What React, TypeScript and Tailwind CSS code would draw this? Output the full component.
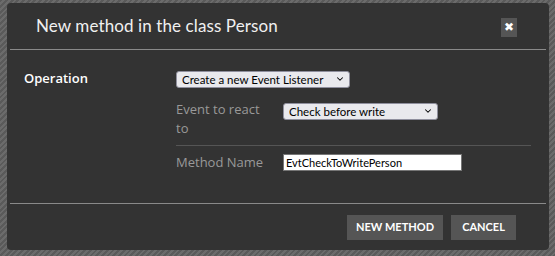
import { ChevronDown } from 'lucide-react'

const OPERATIONS = ['Create a new Event Listener', 'Create a new Method']
const EVENTS = ['Check before write', 'After write', 'Before delete']

function Select({ options, width }: { options: string[]; width: string }) {
  return (
    <div className={`relative ${width}`}>
      <select
        defaultValue={options[0]}
        className="w-full h-[17px] appearance-none rounded-[3px] border border-[#8f8f9d] bg-[#e9e9ed] pl-[5px] pr-[16px] text-[11.5px] leading-[15px] text-black font-['Lato',sans-serif] outline-none"
      >
        {options.map((o) => (
          <option key={o}>{o}</option>
        ))}
      </select>
      <ChevronDown
        className="pointer-events-none absolute right-[5px] top-[4px] w-[10px] h-[10px] text-black"
        strokeWidth={2.5}
      />
    </div>
  )
}

export default function App() {
  return (
    <div className="w-[555px] h-[256px] pt-[3px] pl-[7px] bg-[repeating-linear-gradient(135deg,#5a5a5a_0px,#5a5a5a_2px,#6b6b6b_2px,#6b6b6b_4px)]">
      <div className="w-[542px] h-[247px] rounded-[4px] bg-[#333333] px-[3px] flex flex-col">

        {/* Header */}
        <div className="h-[47px] shrink-0 flex items-center justify-between pl-[26px] pr-[29px] border-b border-[#8a8a8a]">
          <h1 className="text-[17px] text-[#f0f0f0] font-['Lato',sans-serif] tracking-[0.1px]">
            New method in the class Person
          </h1>
          <button className="w-[16px] h-[19px] mt-[2px] bg-[#555555] flex items-center justify-center text-white text-[12px] font-bold leading-none font-['DejaVu_Sans',sans-serif]">
            ✖
          </button>
        </div>

        {/* Body */}
        <div className="h-[153px] shrink-0 pt-[20px] pl-[14px] pr-[15px] font-['Open_Sans',sans-serif] text-[13px]">
          <div className="flex">
            <div className="w-[152px] shrink-0 font-semibold text-white leading-[17px]">Operation</div>
            <div className="flex-1 flex flex-col">
              <Select options={OPERATIONS} width="w-[174px]" />

              <div className="flex mt-[12px] pb-[7px] border-b border-[#555555]">
                <div className="w-[107px] shrink-0 text-[#999999] leading-[19px] pr-[10px] -mt-[2px]">Event to react to</div>
                <Select options={EVENTS} width="w-[155px]" />
              </div>

              <div className="flex items-center mt-[7px]">
                <div className="w-[107px] shrink-0 text-[#999999] leading-[19px]">Method Name</div>
                <input
                  defaultValue="EvtCheckToWritePerson"
                  className="w-[179px] h-[17px] bg-white border border-[#767676] pl-[2px] text-[11px] text-black outline-none font-['Lato',sans-serif]"
                />
              </div>
            </div>
          </div>
        </div>

        {/* Footer */}
        <div className="flex-1 border-t border-[#8a8a8a] flex items-center justify-end gap-[8px] pr-[30px]">
          <button className="h-[25px] w-[96px] bg-[#555555] text-white text-[11px] font-bold font-['Lato',sans-serif]">
            NEW METHOD
          </button>
          <button className="h-[25px] w-[65px] bg-[#555555] text-white text-[11px] font-bold font-['Lato',sans-serif]">
            CANCEL
          </button>
        </div>

      </div>
    </div>
  )
}
